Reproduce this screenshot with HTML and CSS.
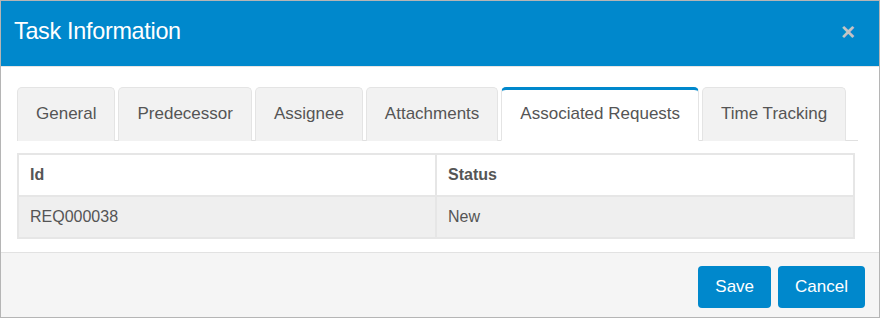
FILE: index.html
```html
<!DOCTYPE html>
<html><head>
<meta charset="utf-8">
<title>Task Information</title>
<link rel="stylesheet" href="styles.css">
</head>
<body>
<div class="modal">
  <div class="modal-head">
    <h3>Task Information</h3>
    <span class="close">&times;</span>
  </div>
  <div class="modal-body">
    <ul class="tabs">
      <li>General</li>
      <li>Predecessor</li>
      <li>Assignee</li>
      <li>Attachments</li>
      <li class="active">Associated Requests</li>
      <li>Time Tracking</li>
    </ul>
    <table class="grid">
      <thead>
        <tr><th class="col-id">Id</th><th>Status</th></tr>
      </thead>
      <tbody>
        <tr><td>REQ000038</td><td>New</td></tr>
      </tbody>
    </table>
  </div>
  <div class="modal-foot">
    <button class="btn">Save</button>
    <button class="btn">Cancel</button>
  </div>
</div>
</body>
</html>
```
FILE: styles.css
```css
html, body { margin: 0; padding: 0; background: #fff; }
body { font-family: "Liberation Sans", Arial, sans-serif; font-size: 16px; color: #555; }

.modal {
  width: 880px;
  height: 318px;
  box-sizing: border-box;
  border: 1px solid #b5b5b5;
  display: flex;
  flex-direction: column;
}

.modal-head {
  background: #0088cc;
  border-bottom: 1px solid #e5e5e5;
  display: flex;
  align-items: center;
  padding: 0 24px 4px 13px;
  box-sizing: border-box;
  height: 66px;
}
.modal-head h3 {
  margin: 0;
  flex: 1;
  color: #fff;
  font-weight: normal;
  font-size: 23.4px;
  letter-spacing: -0.3px;
}
.close {
  color: #c4c4c4;
  font-weight: bold;
  font-size: 24px;
  line-height: 1;
}

.modal-body {
  flex: 1;
  padding: 20px 21px 0 16px;
  border-bottom: 1px solid #e2e2e2;
}

.tabs {
  list-style: none;
  margin: 0;
  padding: 0;
  display: flex;
  gap: 3px;
  border-bottom: 1px solid #e0e0e0;
}
.tabs li {
  background: #f2f2f2;
  border: 1px solid #e4e4e4;
  border-bottom: none;
  border-radius: 5px 5px 0 0;
  padding: 16px 18px;
  font-size: 17px;
  line-height: 20px;
  margin-bottom: -1px;
}
.tabs li.active {
  background: #fff;
  border-top: 3px solid #0088cc;
  padding-top: 14px;
  border-bottom: 1px solid #fff;
}

.grid {
  margin-top: 12px;
  width: 838px;
  border-collapse: collapse;
  border: 2px solid #e6e6e6;
}
.grid th, .grid td {
  border: 2px solid #e6e6e6;
  text-align: left;
  padding: 10px 11px;
  line-height: 20px;
}
.grid th { font-weight: bold; color: #555; }
.grid td { background: #efefef; }
.col-id { width: 394px; }

.modal-foot {
  background: #f5f5f5;
  height: 64px;
  display: flex;
  justify-content: flex-end;
  align-items: center;
  gap: 7px;
  padding: 0 14px;
}
.btn {
  background: #0088cc;
  color: #fff;
  border: none;
  border-radius: 4px;
  height: 42px;
  padding: 0 17px;
  font-family: "Liberation Sans", Arial, sans-serif;
  font-size: 17px;
  margin-top: 4px;
}
```
